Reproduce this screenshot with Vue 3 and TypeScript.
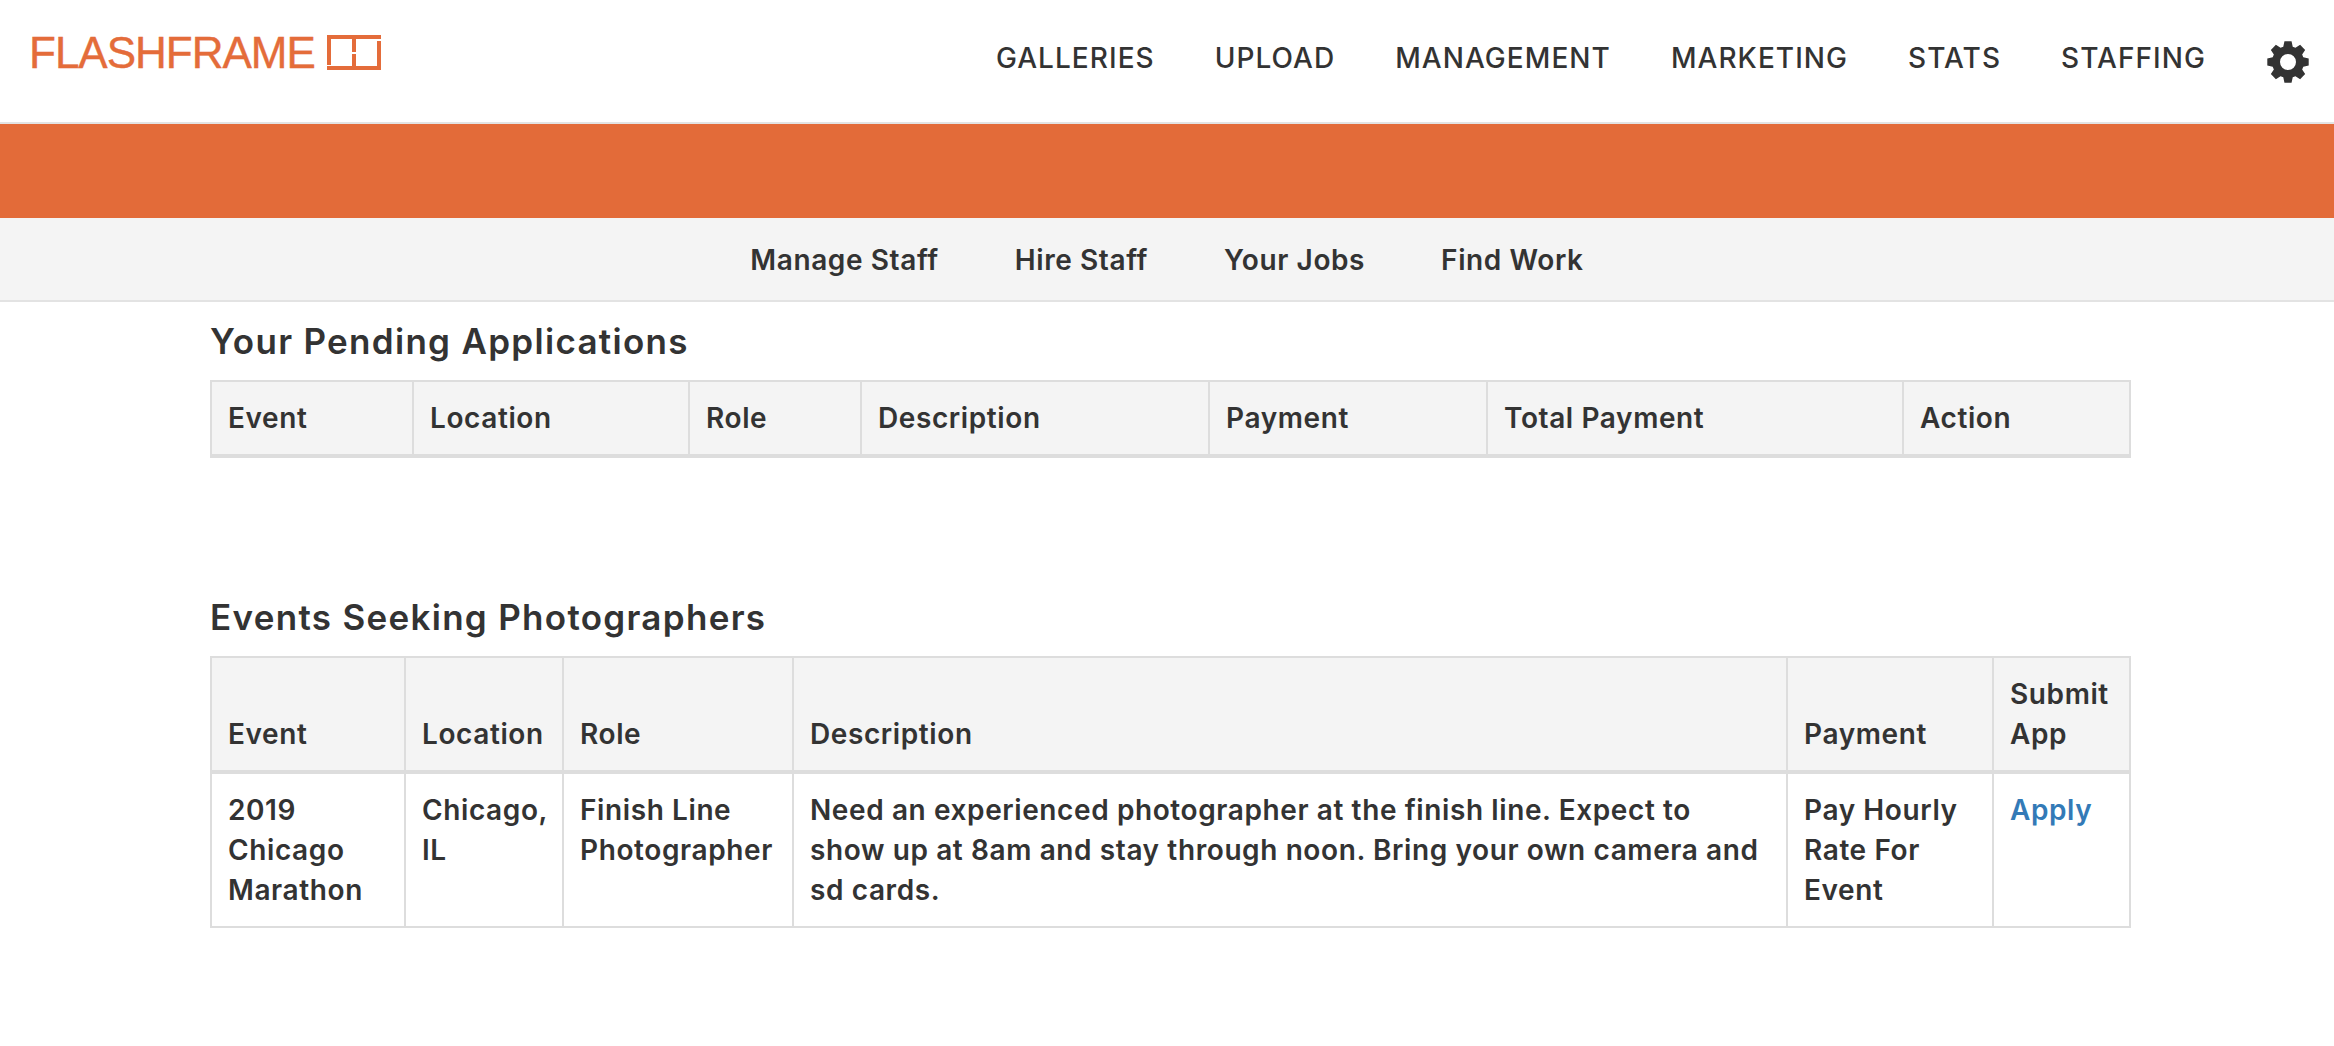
<script setup lang="ts">
const navItems = ['GALLERIES', 'UPLOAD', 'MANAGEMENT', 'MARKETING', 'STATS', 'STAFFING']
const subItems = ['Manage Staff', 'Hire Staff', 'Your Jobs', 'Find Work']

const pendingCols = [
  { label: 'Event', width: 202 },
  { label: 'Location', width: 276 },
  { label: 'Role', width: 172 },
  { label: 'Description', width: 348 },
  { label: 'Payment', width: 278 },
  { label: 'Total Payment', width: 416 },
  { label: 'Action', width: 227 },
]

const eventCols = [
  { label: 'Event', width: 194 },
  { label: 'Location', width: 158 },
  { label: 'Role', width: 230 },
  { label: 'Description', width: 994 },
  { label: 'Payment', width: 206 },
  { label: 'Submit App', width: 137 },
]

// 8 tooth cog, same shape as the font icon
function cogPath(): string {
  const cx = 24
  const cy = 24
  const pts: string[] = []
  for (let i = 0; i < 8; i++) {
    const a = (i * Math.PI) / 4
    const offsets: [number, number][] = [
      [-0.3, 16],
      [-0.17, 21],
      [0.17, 21],
      [0.3, 16],
    ]
    for (const [d, r] of offsets) {
      pts.push(`${(cx + r * Math.cos(a + d)).toFixed(2)} ${(cy + r * Math.sin(a + d)).toFixed(2)}`)
    }
  }
  return `M${pts.join('L')}Z`
}
const cog = cogPath()
</script>

<template>
  <div class="page">
    <header class="topbar">
      <a class="logo">
        <span class="logo__text">FLASHFRAME</span>
        <svg class="logo__mark" width="54" height="35" viewBox="0 0 54 35" fill="none" stroke="#e46c3a" stroke-width="4">
          <path d="M2 30V2M0 2H54M27 2V17M27 19V33M0 33H54M52 35V6" />
        </svg>
      </a>
      <nav class="topnav">
        <a v-for="item in navItems" :key="item" class="topnav__item">{{ item }}</a>
      </nav>
      <svg class="cog" width="48" height="48" viewBox="0 0 48 48">
        <path :d="cog + 'M24 16a8 8 0 1 0 0 16a8 8 0 1 0 0-16Z'" fill="#333" fill-rule="evenodd" />
      </svg>
    </header>

    <div class="banner"></div>

    <nav class="subnav">
      <a v-for="item in subItems" :key="item" class="subnav__item">{{ item }}</a>
    </nav>

    <main class="content">
      <h2 class="title">Your Pending Applications</h2>
      <table class="table">
        <colgroup>
          <col v-for="col in pendingCols" :key="col.label" :style="{ width: col.width + 'px' }" />
        </colgroup>
        <thead>
          <tr>
            <th v-for="col in pendingCols" :key="col.label">{{ col.label }}</th>
          </tr>
        </thead>
      </table>

      <h2 class="title title--second">Events Seeking Photographers</h2>
      <table class="table">
        <colgroup>
          <col v-for="col in eventCols" :key="col.label" :style="{ width: col.width + 'px' }" />
        </colgroup>
        <thead>
          <tr>
            <th v-for="col in eventCols" :key="col.label">{{ col.label }}</th>
          </tr>
        </thead>
        <tbody>
          <tr>
            <td>2019 Chicago Marathon</td>
            <td>Chicago, IL</td>
            <td>Finish Line Photographer</td>
            <td>Need an experienced photographer at the finish line. Expect to show up at 8am and stay through noon. Bring your own camera and sd cards.</td>
            <td>Pay Hourly Rate For Event</td>
            <td><a class="apply">Apply</a></td>
          </tr>
        </tbody>
      </table>
    </main>
  </div>
</template>

<style>
html,
body {
  background: #fff;
  margin: 0;
}
</style>

<style scoped>
.page {
  color: #333;
  font-family: 'Inter', 'Liberation Sans', sans-serif;
  font-size: 28px;
  letter-spacing: 0.6px;
  line-height: 40px;
  min-height: 1046px;
}

.topbar {
  align-items: flex-start;
  border-bottom: 2px solid #e3e3e3;
  box-sizing: border-box;
  display: flex;
  height: 124px;
}

.logo {
  align-items: center;
  color: #e46c3a;
  display: flex;
  gap: 12px;
  margin: 35px 0 0 29px;
}

.logo__text {
  font-family: 'Liberation Sans', Arial, sans-serif;
  font-size: 44px;
  letter-spacing: -1px;
  line-height: 35px;
  -webkit-text-stroke: 0.4px #e46c3a;
}

.topnav {
  display: flex;
  gap: 60px;
  margin-left: auto;
  margin-top: 38px;
}

.topnav__item {
  font-size: 28px;
  font-weight: 500;
  letter-spacing: 1.05px;
}

.cog {
  margin: 38px 22px 0 58px;
}

.banner {
  background: #e36b39;
  height: 94px;
}

.subnav {
  background: #f4f4f4;
  border-bottom: 2px solid #e3e3e3;
  box-sizing: border-box;
  display: flex;
  gap: 76px;
  height: 84px;
  justify-content: center;
  padding-top: 22px;
}

.subnav__item {
  font-weight: 600;
}

.content {
  padding: 0 204px 0 210px;
}

.title {
  font-size: 35px;
  font-weight: 600;
  letter-spacing: 1.3px;
  line-height: 40px;
  margin: 19px 0 19px;
}

.title--second {
  margin-top: 139px;
}

.table {
  border-collapse: collapse;
  table-layout: fixed;
  width: 1919px;
}

.table th,
.table td {
  border: 2px solid #ddd;
  font-weight: 600;
  padding: 16px;
  text-align: left;
  vertical-align: top;
}

.table th {
  background: #f4f4f4;
  border-bottom-width: 4px;
  vertical-align: bottom;
}

.apply {
  color: #337ab7;
}
</style>
